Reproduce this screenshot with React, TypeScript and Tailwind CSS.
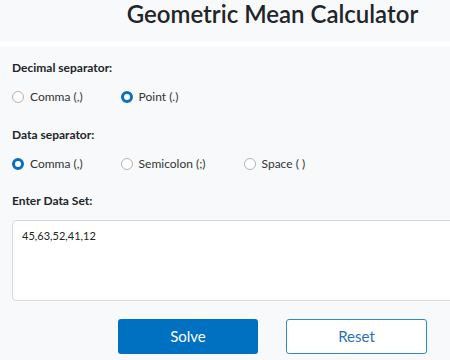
import React from "react";

function Radio({ label, checked }: { label: string; checked?: boolean }) {
  return (
    <label className="flex items-center gap-[6px] h-[16px] cursor-pointer">
      {checked ? (
        <span className="w-[12px] h-[12px] rounded-full border-[3.5px] border-[#0a6fc0] bg-white box-border" />
      ) : (
        <span className="w-[12px] h-[12px] rounded-full border border-[#b3b3b3] bg-white box-border" />
      )}
      <span className="text-[12px] leading-[16px] text-[#333333]">{label}</span>
    </label>
  );
}

export default function App() {
  return (
    <div className="w-[450px] h-[360px] overflow-hidden bg-[#f8f9fa] font-['Lato',sans-serif]">
      <div className="w-[545px]">
        <div className="h-[41px] bg-[#f8f9fa] flex justify-center">
          <h1 className="text-[24px] leading-[28px] font-semibold text-[#212529]">
            Geometric Mean Calculator
          </h1>
        </div>
        <div className="h-[6px] bg-white" />
        <div className="px-[12px] pt-[13px]">
          <div className="text-[12px] leading-[16px] font-bold text-[#212529]">Decimal separator:</div>
          <div className="flex gap-[38px] mt-[13px]">
            <Radio label="Comma (,)" />
            <Radio label="Point (.)" checked />
          </div>
          <div className="text-[12px] leading-[16px] font-bold text-[#212529] mt-[22px]">Data separator:</div>
          <div className="flex gap-[38px] mt-[13px]">
            <Radio label="Comma (,)" checked />
            <Radio label="Semicolon (;)" />
            <Radio label="Space ( )" />
          </div>
          <div className="text-[12px] leading-[16px] font-bold text-[#212529] mt-[21px]">Enter Data Set:</div>
          <textarea
            className="block mt-[11px] w-full h-[81px] resize-none bg-white border border-[#d9d9d9] rounded-[4px] pt-[7px] pl-[9px] text-[11px] leading-[16px] text-[#222222] outline-none font-['Lato',sans-serif]"
            defaultValue="45,63,52,41,12"
          />
          <div className="flex justify-center gap-[28px] mt-[18px]">
            <button className="w-[140px] h-[35px] rounded-[3px] bg-[#0070c0] text-white text-[15px]">
              Solve
            </button>
            <button className="w-[141px] h-[35px] rounded-[3px] bg-white border border-[#3088d2] text-[#2b6fba] text-[15px]">
              Reset
            </button>
          </div>
        </div>
      </div>
    </div>
  );
}
